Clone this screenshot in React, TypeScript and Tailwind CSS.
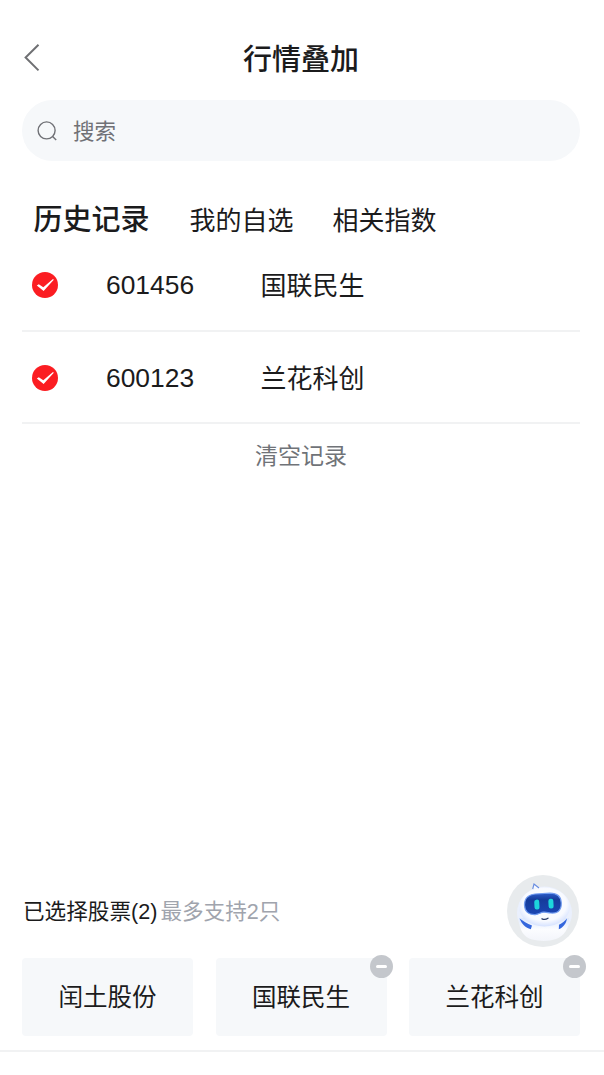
import React from "react";

const records = [
  { code: "601456", name: "国联民生" },
  { code: "600123", name: "兰花科创" },
];

const selected = [
  { name: "闰土股份", removable: false },
  { name: "国联民生", removable: true },
  { name: "兰花科创", removable: true },
];

function CheckBadge() {
  return (
    <svg className="h-[26px] w-[26px]" viewBox="0 0 26 26">
      <circle cx="13" cy="13" r="13" fill="#fb1d22" />
      <path d="M4.8 13.4 L6.8 12.2 L11.3 15.2 L21 7 L21.8 7.7 L11.6 19 Z" fill="#fff" />
    </svg>
  );
}

function Robot() {
  return (
    <svg className="h-[72px] w-[72px]" viewBox="0 0 72 72">
      <defs>
        <radialGradient id="head" cx="0.5" cy="0.42" r="0.6">
          <stop offset="0" stopColor="#ffffff" />
          <stop offset="0.72" stopColor="#f8faff" />
          <stop offset="1" stopColor="#d0deff" />
        </radialGradient>
        <linearGradient id="body" x1="0" y1="0" x2="0" y2="1">
          <stop offset="0" stopColor="#dce8fd" />
          <stop offset="0.5" stopColor="#fbfcff" />
          <stop offset="1" stopColor="#f3f5fb" />
        </linearGradient>
        <linearGradient id="visor" x1="0" y1="0" x2="0" y2="1">
          <stop offset="0" stopColor="#2c5cc9" />
          <stop offset="0.3" stopColor="#153c9b" />
          <stop offset="1" stopColor="#1b46b4" />
        </linearGradient>
      </defs>
      <circle cx="36" cy="36" r="36" fill="#e8ebed" />
      <ellipse cx="37.5" cy="38" rx="27.5" ry="26.5" fill="#eaf0fd" />
      <path d="M12 43 C12 56 17 62 25 64.5 C33 66.5 42 66.5 49 64 C57 61 62 54 62 43 Z" fill="url(#body)" />
      <path d="M12.5 43.5 C16 46 20 48.5 25 50.5 L23.8 54.3 C18.5 52.5 15 49.5 12.5 43.5 Z" fill="#3567dd" />
      <path d="M60 43.5 C58 46 55 48 52 49.8 L51.8 54.3 C56.5 52 59 49 60 43.5 Z" fill="#3567dd" />
      <ellipse cx="37.4" cy="32" rx="25.4" ry="19.6" fill="url(#head)" />
      <path d="M25.7 14 L27 9 L32 13" fill="#f5f8ff" stroke="#668be0" strokeWidth="1.1" />
      <path d="M17.5 30 C17.5 22.7 22 19.6 28 19 L43 18.2 C50.5 18.2 54 21.5 54.3 28 C54.5 36.5 49.5 38.7 43.5 38 C40.5 37.6 39.5 37 36.5 37.2 C33.5 37.4 32 39.3 28.3 39.6 C21.5 40 17.7 36.5 17.5 30 Z" fill="url(#visor)" stroke="#729cf0" strokeWidth="1.2" />
      <rect x="27.4" y="24.6" width="5" height="10" rx="2.2" fill="#1dd6dc" transform="rotate(-3 30 30)" />
      <rect x="41.5" y="23.8" width="5" height="9.8" rx="2.2" fill="#1dd6dc" transform="rotate(-3 44 29)" />
      <path d="M35 43.8 C36.6 44.6 39.3 44.4 41 43.2" fill="none" stroke="#293b68" strokeWidth="1.3" strokeLinecap="round" />
    </svg>
  );
}

export default function App() {
  return (
    <div className="flex h-[1075px] w-[604px] flex-col bg-white font-['Liberation_Sans','Noto_Sans_CJK_SC',sans-serif] text-[#1b1b1c]">
      <header className="grid h-[100px] shrink-0 grid-cols-[100px_1fr_102px] items-center pt-[18px]">
        <svg className="mb-0.5 ml-6 h-7 w-4" viewBox="0 0 16 28" fill="none" stroke="#6f7073" strokeWidth="2">
          <path d="M14.5 0.8 L1.6 13.5 L14.5 26.4" />
        </svg>
        <h1 className="pt-0.5 text-center text-[29px] leading-[40px] font-medium">行情叠加</h1>
      </header>

      <div className="mr-6 ml-[22px] flex h-[61px] shrink-0 items-center rounded-full bg-[#f6f8fa] pl-[15px]">
        <svg className="h-5 w-5" viewBox="0 0 20 20" fill="none" stroke="#707176" strokeWidth="1.4">
          <circle cx="9.6" cy="9.4" r="8.5" />
          <path d="M15.6 15.4 L19.2 19" />
        </svg>
        <span className="ml-4 pt-0.5 text-[21.5px] leading-8 text-[#707176]">搜索</span>
      </div>

      <nav className="flex h-[78px] shrink-0 items-center pt-10 pl-[33.5px]">
        <span className="text-[29px] leading-10 font-medium">历史记录</span>
        <span className="ml-10 pt-0.5 text-[26px] leading-9">我的自选</span>
        <span className="ml-[39px] pt-0.5 text-[26px] leading-9">相关指数</span>
      </nav>

      <main className="flex flex-1 flex-col pr-6 pl-[22px]">
        {records.map((record) => (
          <div key={record.code} className="flex h-[92.5px] items-center border-b-2 border-[#f1f2f3] pt-0.5 pl-[10px]">
            <CheckBadge />
            <span className="ml-12 w-[154.5px] text-[26.4px] leading-10">{record.code}</span>
            <span className="pt-0.5 text-[26px] leading-9">{record.name}</span>
          </div>
        ))}
        <button className="self-center pt-[15px] text-[23px] leading-[34px] text-[#707378]">清空记录</button>
      </main>

      <footer className="shrink-0">
        <div className="flex h-[83px] items-start justify-between pr-[25px] pl-[23px]">
          <p className="pt-[21px] text-[21.6px] leading-8">
            已选择股票(2)<span className="ml-[3px] text-[#a0a4ad]">最多支持2只</span>
          </p>
          <Robot />
        </div>
        <div className="grid grid-cols-3 gap-[22.5px] pr-6 pb-[14px] pl-[22px]">
          {selected.map((stock) => (
            <div key={stock.name} className="relative flex h-[78px] items-center justify-center rounded-sm bg-[#f6f8fa] pt-0.5 text-[24.5px] leading-10">
              {stock.name}
              {stock.removable && (
                <span className="absolute -top-[3px] -right-[6px] flex h-[23px] w-[23px] items-center justify-center rounded-full bg-[#c4c7cc]">
                  <span className="h-[3px] w-[11px] rounded-full bg-white" />
                </span>
              )}
            </div>
          ))}
        </div>
        <div className="h-[25px] border-t-2 border-[#f1f2f3]" />
      </footer>
    </div>
  );
}
